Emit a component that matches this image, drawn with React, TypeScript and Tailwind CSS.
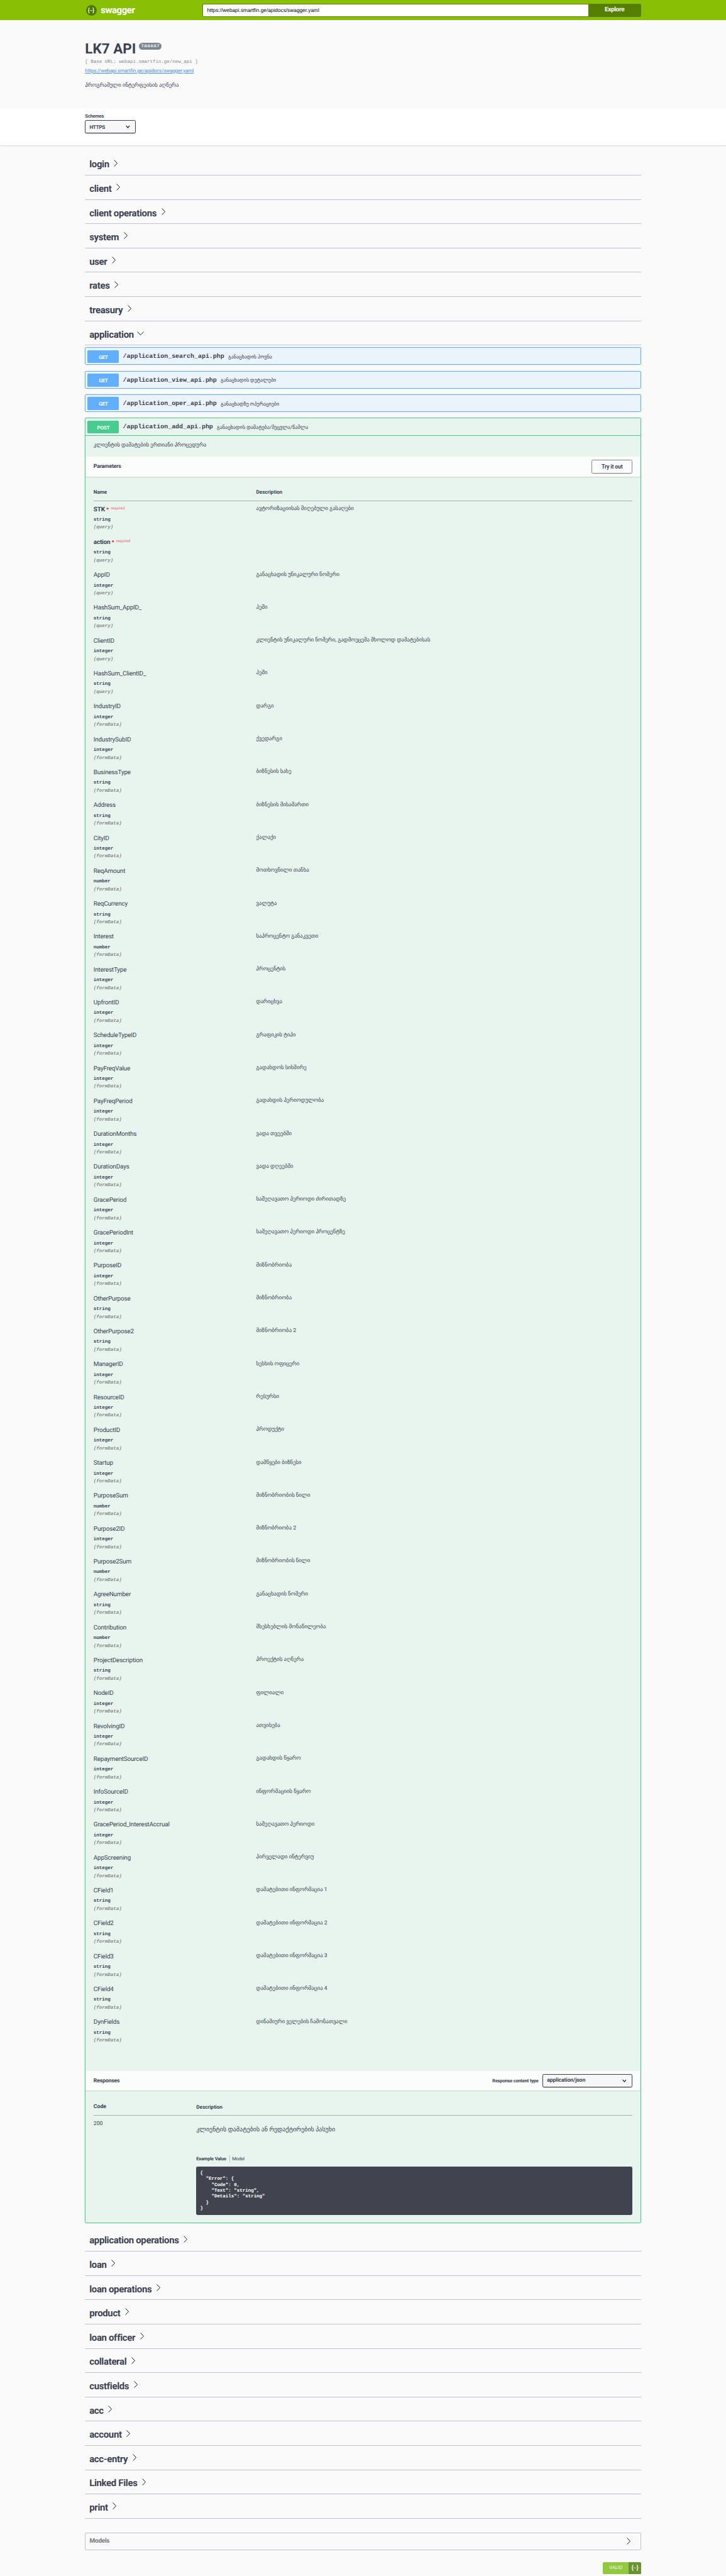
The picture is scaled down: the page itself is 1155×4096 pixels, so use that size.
import React from "react";

type Param = { name: string; type: "string" | "integer" | "number"; desc?: string; required?: boolean; query?: boolean };

const params: Param[] = [
  { name: "STK", type: "string", desc: "ავტორიზაციისას მიღებული გასაღები", required: true, query: true },
  { name: "action", type: "string", required: true, query: true },
  { name: "AppID", type: "integer", desc: "განაცხადის უნიკალური ნომერი", query: true },
  { name: "HashSum_AppID_", type: "string", desc: "ჰეში", query: true },
  { name: "ClientID", type: "integer", desc: "კლიენტის უნიკალური ნომერი, გადმოეცემა მხოლოდ დამატებისას", query: true },
  { name: "HashSum_ClientID_", type: "string", desc: "ჰეში", query: true },
  { name: "IndustryID", type: "integer", desc: "დარგი" },
  { name: "IndustrySubID", type: "integer", desc: "ქვედარგი" },
  { name: "BusinessType", type: "string", desc: "ბიზნესის სახე" },
  { name: "Address", type: "string", desc: "ბიზნესის მისამართი" },
  { name: "CityID", type: "integer", desc: "ქალაქი" },
  { name: "ReqAmount", type: "number", desc: "მოთხოვნილი თანხა" },
  { name: "ReqCurrency", type: "string", desc: "ვალუტა" },
  { name: "Interest", type: "number", desc: "საპროცენტო განაკვეთი" },
  { name: "InterestType", type: "integer", desc: "პროცენტის" },
  { name: "UpfrontID", type: "integer", desc: "დარიცხვა" },
  { name: "ScheduleTypeID", type: "integer", desc: "გრაფიკის ტიპი" },
  { name: "PayFreqValue", type: "integer", desc: "გადახდოს სიხშირე" },
  { name: "PayFreqPeriod", type: "integer", desc: "გადახდის პერიოდულობა" },
  { name: "DurationMonths", type: "integer", desc: "ვადა თვეებში" },
  { name: "DurationDays", type: "integer", desc: "ვადა დღეებში" },
  { name: "GracePeriod", type: "integer", desc: "საშეღავათო პერიოდი ძირითადზე" },
  { name: "GracePeriodInt", type: "integer", desc: "საშეღავათო პერიოდი პროცენტზე" },
  { name: "PurposeID", type: "integer", desc: "მიზნობრიობა" },
  { name: "OtherPurpose", type: "string", desc: "მიზნობრიობა" },
  { name: "OtherPurpose2", type: "string", desc: "მიზნობრიობა 2" },
  { name: "ManagerID", type: "integer", desc: "სესხის ოფიცერი" },
  { name: "ResourceID", type: "integer", desc: "რესურსი" },
  { name: "ProductID", type: "integer", desc: "პროდუქტი" },
  { name: "Startup", type: "integer", desc: "დამწყები ბიზნესი" },
  { name: "PurposeSum", type: "number", desc: "მიზნობრიობის წილი" },
  { name: "Purpose2ID", type: "integer", desc: "მიზნობრიობა 2" },
  { name: "Purpose2Sum", type: "number", desc: "მიზნობრიობის წილი" },
  { name: "AgreeNumber", type: "string", desc: "განაცხადის ნომერი" },
  { name: "Contribution", type: "number", desc: "მსესხებლის მონაწილეობა" },
  { name: "ProjectDescription", type: "string", desc: "პროექტის აღწერა" },
  { name: "NodeID", type: "integer", desc: "ფილიალი" },
  { name: "RevolvingID", type: "integer", desc: "ათვისება" },
  { name: "RepaymentSourceID", type: "integer", desc: "გადახდის წყარო" },
  { name: "InfoSourceID", type: "integer", desc: "ინფორმაციის წყარო" },
  { name: "GracePeriod_InterestAccrual", type: "integer", desc: "საშეღავათო პერიოდი" },
  { name: "AppScreening", type: "integer", desc: "პირველადი ინტერვიუ" },
  { name: "CField1", type: "string", desc: "დამატებითი ინფორმაცია 1" },
  { name: "CField2", type: "string", desc: "დამატებითი ინფორმაცია 2" },
  { name: "CField3", type: "string", desc: "დამატებითი ინფორმაცია 3" },
  { name: "CField4", type: "string", desc: "დამატებითი ინფორმაცია 4" },
  { name: "DynFields", type: "string", desc: "დინამიური ველების ჩამონათვალი" },
];

const tagsBefore = ["login", "client", "client operations", "system", "user", "rates", "treasury"];
const tagsAfter = [
  "application operations", "loan", "loan operations", "product", "loan officer", "collateral",
  "custfields", "acc", "account", "acc-entry", "Linked Files", "print",
];

const getOperations = [
  { path: "/application_search_api.php", summary: "განაცხადის პოვნა" },
  { path: "/application_view_api.php", summary: "განაცხადის დეტალები" },
  { path: "/application_oper_api.php", summary: "განაცხადზე ოპერაციები" },
];

const exampleJson = `{
  "Error": {
    "Code": 0,
    "Text": "string",
    "Details": "string"
  }
}`;

function Chevron({ down = false }: { down?: boolean }) {
  return down ? (
    <svg className="h-[10px] w-[18px]" viewBox="0 0 18 10" fill="none" stroke="#111" strokeWidth="1.6">
      <path d="M.8.8 9 9 17.2.8" />
    </svg>
  ) : (
    <svg className="h-[18px] w-[10px]" viewBox="0 0 10 18" fill="none" stroke="#111" strokeWidth="1.6">
      <path d="M.8.8 9 9 .8 17.2" />
    </svg>
  );
}

function SelectArrow() {
  return (
    <svg className="h-[9px] w-[11px]" viewBox="0 0 11 9" fill="none" stroke="#111" strokeWidth="1.8">
      <path d="M1 1.5 5.5 6.8 10 1.5" />
    </svg>
  );
}

function Braces({ className }: { className: string }) {
  return (
    <svg className={className} viewBox="0 0 20 16" fill="none" stroke="#fff" strokeWidth="1.9">
      <path d="M6 1.2H5Q3.6 1.2 3.6 2.8V5.6Q3.6 8 1.4 8 3.6 8 3.6 10.4V13.2Q3.6 14.8 5 14.8H6" />
      <path d="M14 1.2H15Q16.4 1.2 16.4 2.8V5.6Q16.4 8 18.6 8 16.4 8 16.4 10.4V13.2Q16.4 14.8 15 14.8H14" />
      <path d="M6 8H7.8M9.1 8H10.9M12.2 8H14" />
    </svg>
  );
}

function Tag({ name, open = false }: { name: string; open?: boolean }) {
  return (
    <div className="flex h-[62px] items-center border-b border-[#3b4151]/30 pl-[11px] pt-[8px]">
      <h3 className="text-[24px] font-bold leading-[30px] tracking-[-0.022em]">{name}</h3>
      <span className={open ? "ml-[8px] pb-[5px]" : "ml-[12px] pb-[8px]"}>
        <Chevron down={open} />
      </span>
    </div>
  );
}

function Summary({ method, path, summary }: { method: string; path: string; summary: string }) {
  return (
    <div className="flex h-[44px] items-center pl-[5px]">
      <span
        className={`flex h-[33px] w-[80px] items-center justify-center rounded-[3px] pt-[2px] text-[13px] font-bold tracking-[-0.03em] text-white [text-shadow:0_1px_0_rgba(0,0,0,.1)] ${
          method === "GET" ? "bg-[#61affe]" : "bg-[#49cc90]"
        }`}
      >
        {method}
      </span>
      <span className="ml-[10px] pt-[2px] font-['Liberation_Mono',monospace] text-[16px] font-bold leading-[20px]">
        {path}
      </span>
      <span className="ml-[10px] pt-[1px] text-[13px] leading-[20px]">{summary}</span>
    </div>
  );
}

function ParamRow({ param }: { param: Param }) {
  return (
    <div className="grid h-[84px] grid-cols-[415.5px_1fr] pt-[10px]">
      <div>
        <div
          className={`flex h-[26px] items-center text-[16px] leading-[24px] tracking-[-0.02em] ${
            param.required ? "font-bold" : ""
          }`}
        >
          {param.name}
          {param.required && (
            <>
              <span className="ml-[4px] text-[14px] leading-[20px] text-[#ff0000]">*</span>
              <span className="ml-[5px] pb-[8px] text-[10px] font-normal leading-[14px] tracking-normal text-[#ff0000]/60">
                required
              </span>
            </>
          )}
        </div>
        <div className="pt-[3px] font-['Liberation_Mono',monospace] text-[12px] font-bold leading-[20px]">{param.type}</div>
        <div className="font-['Liberation_Mono',monospace] text-[12px] font-bold italic leading-[20px] text-[#888]">
          ({param.query ? "query" : "formData"})
        </div>
      </div>
      <div className="text-[14px] leading-[20px]">{param.desc}</div>
    </div>
  );
}

export default function App() {
  return (
    <div className="w-full bg-[#fafafa] font-['Roboto',sans-serif] text-[#3b4151] [text-rendering:geometricPrecision] [zoom:0.62275]">
      <header className="h-[52px] bg-[#89bf04]">
        <div className="mx-auto flex h-full w-[1420px] items-center pt-[1px]">
          <div className="flex w-[300px] items-center pl-[2px]">
            <div className="flex h-[28px] w-[28px] items-center justify-center rounded-full bg-[#4f7a02]">
              <Braces className="h-[15px] w-[19px]" />
            </div>
            <span className="ml-[10px] text-[24px] font-bold leading-[28px] tracking-[-0.028em] text-white">swagger</span>
          </div>
          <div className="flex h-[35px] flex-1 items-center rounded-l-[4px] border-2 border-r-0 border-[#547f00] bg-white pl-[10px] font-['Liberation_Sans',sans-serif] text-[13.333px] text-black">
            https://webapi.smartfin.ge/apidocs/swagger.yaml
          </div>
          <div className="flex h-[35px] w-[135px] items-center justify-center rounded-r-[4px] bg-[#547f00] text-[16px] font-bold tracking-[-0.03em] text-white">
            Explore
          </div>
        </div>
      </header>

      <section className="mx-auto h-[225px] w-[1420px] pt-[50px]">
        <div className="flex h-[49px] items-center">
          <h2 className="pt-[2px] text-[36px] font-bold leading-[48px]">LK7 API</h2>
          <span className="mb-[17px] ml-[7px] flex h-[19px] w-[59px] items-center justify-center rounded-full bg-[#7d8492] text-[10px] font-bold tracking-[-0.03em] text-white">
            7.0.0.0.0.7
          </span>
        </div>
        <div className="h-[16px] font-['Liberation_Mono',monospace] text-[12px] leading-[18px] text-[#888]">
          [ Base URL: webapi.smartfin.ge/new_api ]
        </div>
        <div className="text-[13px] leading-[26px] tracking-[-0.02em] text-[#4990e2] underline">
          https://webapi.smartfin.ge/apidocs/swagger.yaml
        </div>
        <p className="pt-[13px] text-[14px] leading-[26px]">პროგრამული ინტერფეისის აღწერა</p>
      </section>

      <section className="h-[94px] bg-white shadow-[0_1px_2px_0_rgba(0,0,0,.15)]">
        <div className="mx-auto w-[1420px] pt-[13px]">
          <div className="text-[12px] font-bold leading-[14px] tracking-[-0.024em]">Schemes</div>
          <div className="mt-[2px] flex h-[35px] w-[130px] items-center justify-between rounded-[4px] border-2 border-[#41444e] bg-[#f7f7f7] pl-[10px] pr-[14px] pt-[2px] text-[13px] font-bold tracking-[-0.035em] shadow-[0_1px_2px_0_rgba(0,0,0,.25)]">
            HTTPS
            <SelectArrow />
          </div>
        </div>
      </section>

      <main className="mx-auto w-[1420px] pt-[15px]">
        {tagsBefore.map((t) => (
          <Tag key={t} name={t} />
        ))}
        <Tag name="application" open />

        <div className="flex flex-col gap-[15px] pt-[5px]">
          {getOperations.map((op) => (
            <div
              key={op.path}
              className="h-[45px] rounded-[4px] border border-[#61affe] bg-[#ebf3fb] shadow-[0_0_3px_rgba(0,0,0,.19)]"
            >
              <Summary method="GET" path={op.path} summary={op.summary} />
            </div>
          ))}

          <div className="h-[4610px] rounded-[4px] border border-[#49cc90] bg-[#e7f5ee] shadow-[0_0_3px_rgba(0,0,0,.19)]">
            <div className="h-[45px] border-b border-[#49cc90]">
              <Summary method="POST" path="/application_add_api.php" summary="განაცხადის დამატება/შეცვლა/წაშლა" />
            </div>
            <p className="h-[53px] px-[20px] pt-[14px] text-[14px] leading-[20px]">
              კლიენტის დამატების ერთიანი პროცედურა
            </p>

            <div className="flex h-[51px] items-center justify-between bg-[#fbfdfc] px-[20px] shadow-[0_1px_2px_rgba(0,0,0,.15)]">
              <h4 className="pt-[2px] text-[14px] font-bold tracking-[-0.02em]">Parameters</h4>
              <button className="h-[35px] w-[104px] rounded-[4px] border-2 border-[#888] pt-[1px] text-[14px] font-bold tracking-[-0.018em] shadow-[0_1px_2px_rgba(0,0,0,.1)]">
                Try it out
              </button>
            </div>

            <div className="h-[4070px] px-[20px] pt-[20px]">
              <div className="grid h-[42px] grid-cols-[415.5px_1fr] items-end border-b border-[#3b4151]/40 pb-[12px] text-[13px] font-bold leading-[18px]">
                <span>Name</span>
                <span>Description</span>
              </div>
              {params.map((p) => (
                <ParamRow key={p.name} param={p} />
              ))}
            </div>

            <div className="flex h-[51px] items-center bg-[#fbfdfc] px-[20px] shadow-[0_1px_2px_rgba(0,0,0,.15)]">
              <h4 className="flex-1 pt-[2px] text-[14px] font-bold tracking-[-0.02em]">Responses</h4>
              <span className="mr-[10px] pt-[1px] text-[12px] font-bold tracking-[-0.022em]">Response content type</span>
              <div className="flex h-[35px] w-[230px] items-center justify-between rounded-[4px] border-2 border-[#41444e] bg-[#f7f7f7] pl-[10px] pr-[14px] pt-[1px] text-[14px] font-bold tracking-[-0.015em] shadow-[0_1px_2px_0_rgba(0,0,0,.25)]">
                application/json
                <SelectArrow />
              </div>
            </div>

            <div className="px-[20px] pt-[20px]">
              <div className="grid h-[44px] grid-cols-[262.5px_1fr] items-end border-b border-[#3b4151]/40 pb-[11px] font-bold leading-[20px]">
                <span className="text-[14px]">Code</span>
                <span className="text-[13px]">Description</span>
              </div>
              <div className="grid grid-cols-[262.5px_1fr]">
                <div className="pt-[10px] text-[14px] leading-[20px]">200</div>
                <div>
                  <p className="pt-[26px] text-[16px] leading-[24px]">კლიენტის დამატების ან რედაქტირების პასუხი</p>
                  <div className="mt-[50px] flex h-[18px] items-center text-[12px] leading-[18px]">
                    <span className="pt-[2px] font-bold tracking-[-0.019em]">Example Value</span>
                    <span className="ml-[8px] h-[18px] w-px bg-[#3b4151]/30" />
                    <span className="ml-[6px] pt-[2px] tracking-[-0.03em]">Model</span>
                  </div>
                  <pre className="mt-[11px] h-[125px] rounded-[4px] bg-[#41444e] px-[10px] pt-[12px] font-['Liberation_Mono',monospace] text-[12px] font-bold leading-[15px] text-white">
                    {exampleJson}
                  </pre>
                </div>
              </div>
            </div>
          </div>
        </div>

        <div className="pt-[10px]">
          {tagsAfter.map((t) => (
            <Tag key={t} name={t} />
          ))}
        </div>

        <div className="mt-[35px] flex h-[46px] items-center justify-between rounded-[4px] border border-[#3b4151]/30 pl-[10px] pr-[25px]">
          <h4 className="pt-[1px] text-[16px] font-bold leading-[20px] tracking-[-0.025em] text-[#777]">Models</h4>
          <Chevron />
        </div>

        <div className="flex h-[66px] justify-end pt-[30px]">
          <div className="flex h-[30px] w-[97px] overflow-hidden rounded-[3px]">
            <span className="flex w-[66px] items-center justify-center bg-[#93c940] font-['Open_Sans',sans-serif] text-[12px] text-white">
              VALID
            </span>
            <span className="flex flex-1 items-center justify-center bg-[#6b932f]">
              <Braces className="h-[16px] w-[20px]" />
            </span>
          </div>
        </div>
      </main>
    </div>
  );
}
